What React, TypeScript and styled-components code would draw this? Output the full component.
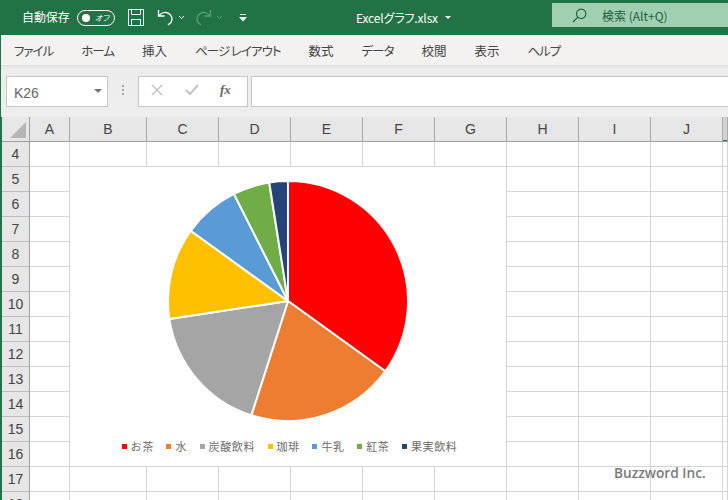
import styled, { createGlobalStyle } from "styled-components";

const JP = `"Noto Sans CJK JP", "Noto Sans", sans-serif`;

const GlobalStyle = createGlobalStyle`
  html, body {
    margin: 0;
    padding: 0;
    background: #fff;
    overflow: hidden;
  }
  * {
    box-sizing: border-box;
  }
`;

const Page = styled.div`
  width: 728px;
  height: 500px;
  overflow: hidden;
  font-family: ${JP};
`;

const TitleBar = styled.header`
  height: 35px;
  background: #217346;
  color: #fff;
  display: flex;
  align-items: center;
  padding-left: 22px;
`;

const AutoSave = styled.span`
  font-size: 12px;
  letter-spacing: -0.1px;
  width: 55px;
  white-space: nowrap;
  margin-top: -2px;
`;

const Toggle = styled.span`
  width: 38px;
  height: 16px;
  border: 1px solid #fff;
  border-radius: 8px;
  display: flex;
  align-items: center;
  padding: 0 4px;
  gap: 5px;
  font-size: 8px;
  font-style: italic;
  font-feature-settings: "palt";
  line-height: 1;
  white-space: nowrap;
  &::before {
    content: "";
    flex: none;
    width: 8px;
    height: 8px;
    border-radius: 50%;
    background: #fff;
  }
`;

const QuickIcons = styled.div`
  display: flex;
  align-items: center;
  margin-left: 13px;
`;

const QuickIcon = styled.svg<{ $gap: number }>`
  display: block;
  margin-right: ${(p) => p.$gap}px;
  flex: none;
`;

const FileName = styled.span`
  font-size: 12px;
  margin-left: 109px;
  display: flex;
  align-items: center;
  gap: 7px;
  white-space: nowrap;
  font-feature-settings: "palt";
  letter-spacing: -0.15px;
  margin-top: -1px;
  &::after {
    content: "";
    border: 3px solid transparent;
    border-top: 3px solid #fff;
    border-bottom: 0;
    width: 0;
    height: 0;
  }
`;

const SearchBox = styled.div`
  margin-left: auto;
  margin-bottom: 5px;
  width: 176px;
  height: 24px;
  background: #a0cfb2;
  color: #1f5f3d;
  display: flex;
  align-items: center;
  padding-left: 20px;
  gap: 15px;
  font-size: 12px;
  white-space: nowrap;
`;

const Ribbon = styled.nav`
  height: 30px;
  background: #f3f2f1;
  border-left: 1px solid #217346;
  display: flex;
  align-items: center;
  padding-left: 13px;
  gap: 28px;
`;

const Tab = styled.span<{ $kana: boolean }>`
  font-size: 12.5px;
  color: #444;
  white-space: nowrap;
  font-feature-settings: "palt";
  letter-spacing: ${(p) => (p.$kana ? "-1px" : "0")};
`;

const FormulaBar = styled.section`
  height: 52px;
  background: linear-gradient(#dcdcdc 0, #ececec 3px, #eeeeee 100%);
  border-left: 1px solid #217346;
  display: flex;
  align-items: flex-start;
  padding: 11px 0 0 5px;
`;

const NameBox = styled.div`
  width: 102px;
  height: 31px;
  background: #fff;
  border: 1px solid #c6c6c6;
  display: flex;
  align-items: center;
  justify-content: space-between;
  padding: 2px 5px 0 7px;
  font-family: "Liberation Sans", sans-serif;
  font-size: 14px;
  color: #666;
  &::after {
    content: "";
    border: 4px solid transparent;
    border-top: 4px solid #777;
    border-bottom: 0;
    margin-top: -4px;
  }
`;

const Grip = styled.span`
  width: 30px;
  height: 28px;
  display: flex;
  flex-direction: column;
  align-items: center;
  justify-content: center;
  gap: 2px;
  i {
    width: 2px;
    height: 2px;
    background: #a6a6a6;
  }
`;

const FormulaButtons = styled.div`
  width: 110px;
  height: 31px;
  background: #fff;
  border: 1px solid #c6c6c6;
  display: flex;
  align-items: center;
  padding: 0 0 3px 12px;
  gap: 22px;
  margin-right: 3px;
`;

const FxLabel = styled.span`
  font-family: "Liberation Serif", serif;
  font-style: italic;
  font-weight: bold;
  font-size: 13px;
  color: #666;
  margin-left: -1px;
`;

const FormulaInput = styled.div`
  flex: 1;
  height: 31px;
  background: #fff;
  border: 1px solid #c6c6c6;
  border-right: 0;
`;

const Sheet = styled.div`
  position: relative;
  border-left: 2px solid #217346;
`;

const columnTemplate = "28px 40px 77px 72px 72px 72px 72px 72px 72px 72px 72px 1fr";

const HeaderRow = styled.div`
  height: 25px;
  display: grid;
  grid-template-columns: ${columnTemplate};
  background: #e6e6e6;
  border-bottom: 1px solid #9f9f9f;
`;

const Corner = styled.div`
  position: relative;
  border-right: 1px solid #9f9f9f;
  &::after {
    content: "";
    position: absolute;
    right: 3px;
    bottom: 3px;
    border-style: solid;
    border-width: 0 0 16px 16px;
    border-color: transparent transparent #b5b5b5 transparent;
  }
`;

const ColumnHead = styled.div<{ $selected?: boolean }>`
  border-right: 1px solid #aaa;
  font-family: "Liberation Sans", sans-serif;
  font-size: 14px;
  color: #444;
  display: flex;
  align-items: center;
  justify-content: center;
  background: ${(p) => (p.$selected ? "#d2d2d2" : "transparent")};
  box-shadow: ${(p) => (p.$selected ? "inset 0 -1px 0 #217346" : "none")};
`;

const Row = styled.div`
  height: 25px;
  display: grid;
  grid-template-columns: ${columnTemplate};
`;

const RowHead = styled.div`
  background: #e6e6e6;
  border-right: 1px solid #9f9f9f;
  border-bottom: 1px solid #bdbdbd;
  font-family: "Liberation Sans", sans-serif;
  font-size: 14px;
  color: #444;
  display: flex;
  align-items: center;
  justify-content: center;
`;

const Cell = styled.div`
  border-right: 1px solid #d4d4d4;
  border-bottom: 1px solid #d4d4d4;
`;

const ChartArea = styled.div`
  position: absolute;
  left: 68px;
  top: 50px;
  width: 436px;
  height: 299px;
  background: #fff;
  display: flex;
  flex-direction: column;
  align-items: center;
  padding-top: 13px;
`;

const PieSvg = styled.svg`
  display: block;
  flex: none;
`;

const Legend = styled.ul`
  list-style: none;
  margin: 16px 0 0 3px;
  padding: 0;
  display: flex;
  gap: 12.6px;
`;

const LegendItem = styled.li<{ $color: string }>`
  display: flex;
  align-items: center;
  gap: 4px;
  font-size: 11px;
  letter-spacing: 0.6px;
  line-height: 16px;
  color: #6a6a6a;
  white-space: nowrap;
  &::before {
    content: "";
    width: 5px;
    height: 5px;
    background: ${(p) => p.$color};
  }
`;

const Watermark = styled.span`
  position: absolute;
  left: 612px;
  top: 346px;
  font-family: "Open Sans", sans-serif;
  font-weight: 600;
  font-size: 13.7px;
  line-height: 20px;
  color: #7a7a7a;
  white-space: nowrap;
`;

const columns = ["A", "B", "C", "D", "E", "F", "G", "H", "I", "J", "K"];
const rows = [4, 5, 6, 7, 8, 9, 10, 11, 12, 13, 14, 15, 16, 17, 18];
const tabs = [
  { label: "ファイル", kana: true },
  { label: "ホーム", kana: true },
  { label: "挿入", kana: false },
  { label: "ページ レイアウト", kana: true },
  { label: "数式", kana: false },
  { label: "データ", kana: true },
  { label: "校閲", kana: false },
  { label: "表示", kana: false },
  { label: "ヘルプ", kana: true },
];

// end angle of each slice, clockwise from the top
const slices = [
  { name: "お茶", color: "#ff0000", end: 125.8 },
  { name: "水", color: "#ed7d31", end: 197.8 },
  { name: "炭酸飲料", color: "#a5a5a5", end: 261.4 },
  { name: "珈琲", color: "#ffc000", end: 305.8 },
  { name: "牛乳", color: "#5b9bd5", end: 333.2 },
  { name: "紅茶", color: "#70ad47", end: 351 },
  { name: "果実飲料", color: "#264478", end: 360 },
];

const polar = (deg: number, r: number, c: number) => {
  const rad = (deg * Math.PI) / 180;
  return `${(c + r * Math.sin(rad)).toFixed(2)} ${(c - r * Math.cos(rad)).toFixed(2)}`;
};

const PieChart = () => {
  const c = 121;
  const r = 120;
  let start = 0;
  return (
    <PieSvg width={242} height={242} viewBox="0 0 242 242">
      {slices.map((s) => {
        const large = s.end - start > 180 ? 1 : 0;
        const d = `M${c} ${c} L${polar(start, r, c)} A${r} ${r} 0 ${large} 1 ${polar(s.end, r, c)} Z`;
        start = s.end;
        return <path key={s.name} d={d} fill={s.color} stroke="#fff" strokeWidth={2} strokeLinejoin="round" />;
      })}
    </PieSvg>
  );
};

const App = () => {
  return (
    <Page>
      <GlobalStyle />
      <TitleBar>
        <AutoSave>自動保存</AutoSave>
        <Toggle>オフ</Toggle>
        <QuickIcons>
          <QuickIcon $gap={13} width="16" height="17" viewBox="0 0 16 17" fill="none" stroke="#fff" strokeWidth="1">
            <path d="M.5.5h15v16H.5z" />
            <path d="M3.5.5v5h9v-5M3.5 16.5v-6h9v6" />
          </QuickIcon>
          <QuickIcon $gap={4} width="17" height="17" viewBox="0 0 17 17" fill="none" stroke="#fff" strokeWidth="1.3">
            <path d="M1.5 1v6h6" />
            <path d="M1.8 6.8C4 3.8 8 2.6 11.5 4.3c3.6 1.8 4.6 6.5 2.4 9.2-.8 1-1.8 1.7-3 2.3" />
          </QuickIcon>
          <QuickIcon $gap={10} width="7" height="5" viewBox="0 0 7 5" fill="none" stroke="#fff" strokeWidth="1">
            <path d="M1 1l2.5 2.5L6 1" />
          </QuickIcon>
          <QuickIcon $gap={4} width="17" height="17" viewBox="0 0 17 17" fill="none" stroke="#5f9b7c" strokeWidth="1.3">
            <path d="M15.5 1v6h-6" />
            <path d="M15.2 6.8C13 3.8 9 2.6 5.5 4.3c-3.6 1.8-4.6 6.5-2.4 9.2.8 1 1.8 1.7 3 2.3" />
          </QuickIcon>
          <QuickIcon $gap={16} width="7" height="5" viewBox="0 0 7 5" fill="none" stroke="#5f9b7c" strokeWidth="1">
            <path d="M1 1l2.5 2.5L6 1" />
          </QuickIcon>
          <QuickIcon $gap={0} width="8" height="8" viewBox="0 0 8 8" fill="#fff">
            <path d="M1 0h6v1H1zM0 3h8L4 7.5z" />
          </QuickIcon>
        </QuickIcons>
        <FileName>Excelグラフ.xlsx</FileName>
        <SearchBox>
          <svg width="15" height="15" viewBox="0 0 15 15" fill="none" stroke="#1f5f3d" strokeWidth="1.1">
            <circle cx="9.2" cy="5.8" r="4.7" />
            <path d="M5.8 9.2L1 14" />
          </svg>
          検索 (Alt+Q)
        </SearchBox>
      </TitleBar>
      <Ribbon>
        {tabs.map((t) => (
          <Tab key={t.label} $kana={t.kana}>
            {t.label}
          </Tab>
        ))}
      </Ribbon>
      <FormulaBar>
        <NameBox>K26</NameBox>
        <Grip>
          <i />
          <i />
          <i />
        </Grip>
        <FormulaButtons>
          <svg width="12" height="12" viewBox="0 0 12 12" fill="none" stroke="#c4c4c4" strokeWidth="1.5">
            <path d="M1 1l10 10M11 1L1 11" />
          </svg>
          <svg width="14" height="12" viewBox="0 0 14 12" fill="none" stroke="#c4c4c4" strokeWidth="2">
            <path d="M1 6l4 4 8-9" />
          </svg>
          <FxLabel>fx</FxLabel>
        </FormulaButtons>
        <FormulaInput />
      </FormulaBar>
      <Sheet>
        <HeaderRow>
          <Corner />
          {columns.map((c) => (
            <ColumnHead key={c} $selected={c === "K"}>
              {c !== "K" && c}
            </ColumnHead>
          ))}
        </HeaderRow>
        {rows.map((n) => (
          <Row key={n}>
            <RowHead>{n}</RowHead>
            {columns.map((c) => (
              <Cell key={c} />
            ))}
          </Row>
        ))}
        <ChartArea>
          <PieChart />
          <Legend>
            {slices.map((s) => (
              <LegendItem key={s.name} $color={s.color}>
                {s.name}
              </LegendItem>
            ))}
          </Legend>
        </ChartArea>
        <Watermark>Buzzword Inc.</Watermark>
      </Sheet>
    </Page>
  );
};

export default App;
